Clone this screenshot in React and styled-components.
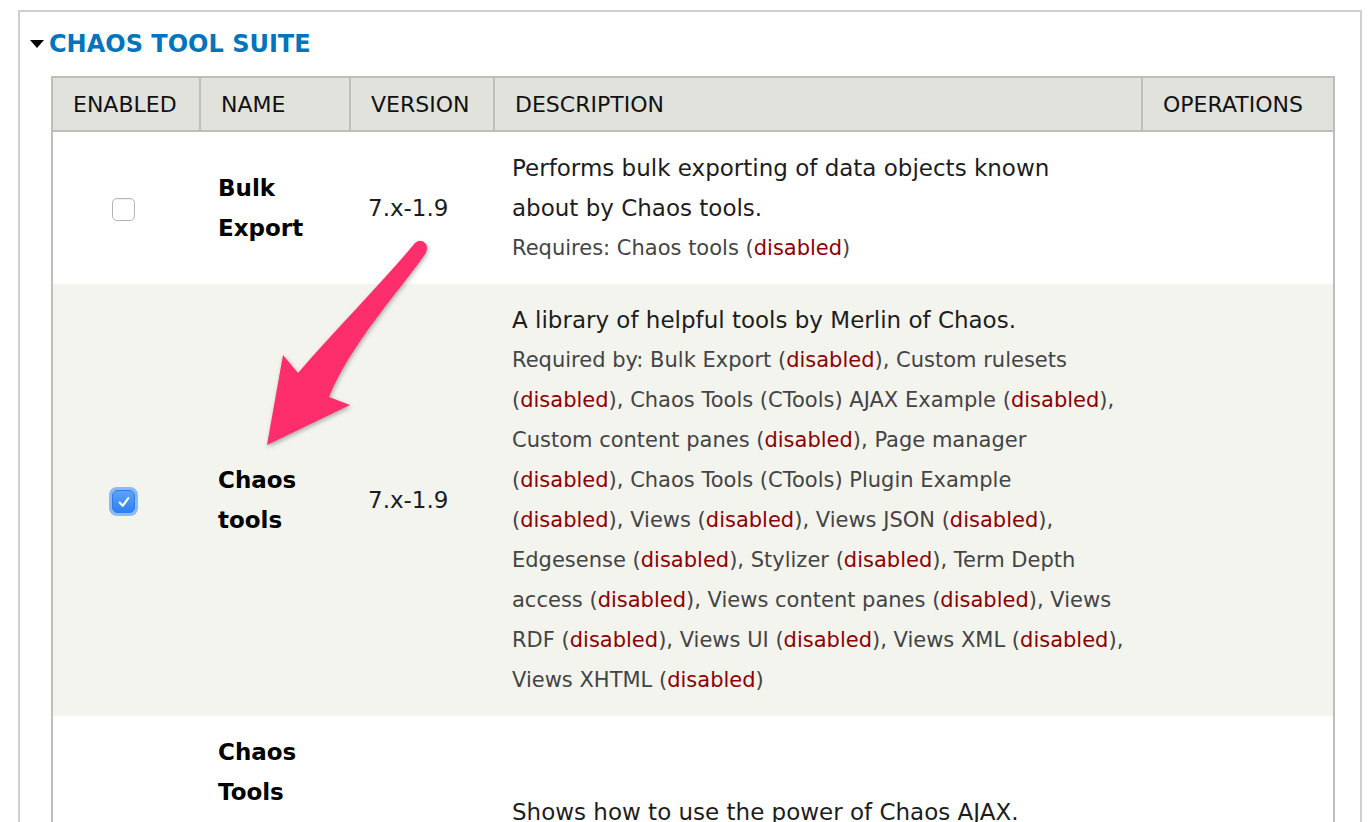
import React from 'react';
import styled, { createGlobalStyle } from 'styled-components';

const GlobalStyle = createGlobalStyle`
  body {
    margin: 0;
    background: #fff;
    font-family: "DejaVu Sans", "Liberation Sans", sans-serif;
    color: #1d1d1d;
  }
`;

const Page = styled.div`
  position: relative;
  padding: 10px 10px 0 18px;
`;

const Fieldset = styled.div`
  border: 2px solid #cfcfcf;
  border-bottom: none;
  padding: 16px 25px 40px 10px;
`;

const Legend = styled.div`
  display: flex;
  align-items: center;
  height: 32px;
  gap: 5px;
  color: #0074bd;
  font-size: 24px;
  font-weight: bold;
  text-transform: uppercase;
`;

const Caret = styled.span`
  width: 0;
  height: 0;
  border-left: 7px solid transparent;
  border-right: 7px solid transparent;
  border-top: 8px solid #000;
`;

const Table = styled.table`
  margin: 16px 0 0 21px;
  width: 1282px;
  table-layout: fixed;
  border-collapse: collapse;
  border-left: 2px solid #bebfb9;
  border-right: 2px solid #bebfb9;
`;

const Th = styled.th`
  height: 52px;
  padding: 0 20px;
  background: #e1e2dc;
  border: 2px solid #bebfb9;
  font-size: 22px;
  font-weight: normal;
  text-align: left;
  text-transform: uppercase;
  color: #111;
`;

const Row = styled.tr`
  background: ${p => (p.$even ? '#f3f4ee' : '#fff')};
`;

const Td = styled.td`
  padding: 16px 18px;
  vertical-align: middle;
  font-size: 23px;
  line-height: 40px;
`;

const CheckCell = styled(Td)`
  padding: 16px 21px 16px 15px;
  text-align: center;
`;

const Name = styled(Td)`
  font-weight: bold;
  color: #000;
`;

const Line = styled.div`
  white-space: nowrap;
`;

const Requires = styled(Line)`
  font-size: 21px;
  color: #444;
`;

const Disabled = styled.span`
  color: #8b0000;
`;

const Box = styled.span`
  display: inline-flex;
  align-items: center;
  justify-content: center;
  vertical-align: middle;
  width: 23px;
  height: 23px;
  box-sizing: border-box;
  border-radius: 5px;
  border: 1px solid ${p => (p.$checked ? '#2f7de8' : '#b4b4b4')};
  background: ${p => (p.$checked ? 'linear-gradient(#5aa2fb, #2f80f0)' : '#fff')};
  box-shadow: ${p => (p.$checked ? '0 0 0 3px #8bb9f6' : 'inset 0 1px 1px rgba(0,0,0,0.06)')};
`;

const Arrow = styled.svg`
  position: absolute;
  left: 255px;
  top: 235px;
  overflow: visible;
  filter: drop-shadow(1px 2px 2px rgba(0, 0, 0, 0.3));
`;

const Checkbox = ({ checked }) => (
  <Box $checked={checked}>
    {checked && (
      <svg width="14" height="14" viewBox="0 0 13 13">
        <path d="M2.5 7 L5.3 10 L10.5 2.8" fill="none" stroke="#fff" strokeWidth="2" strokeLinecap="round" strokeLinejoin="round" />
      </svg>
    )}
  </Box>
);

const dis = <>(<Disabled>disabled</Disabled>)</>;

const modules = [
  {
    name: 'Bulk Export',
    checked: false,
    description: ['Performs bulk exporting of data objects known', 'about by Chaos tools.'],
    extra: [<>Requires: Chaos tools {dis}</>],
  },
  {
    name: 'Chaos tools',
    checked: true,
    description: ['A library of helpful tools by Merlin of Chaos.'],
    extra: [
      <>Required by: Bulk Export {dis}, Custom rulesets</>,
      <>{dis}, Chaos Tools (CTools) AJAX Example {dis},</>,
      <>Custom content panes {dis}, Page manager</>,
      <>{dis}, Chaos Tools (CTools) Plugin Example</>,
      <>{dis}, Views {dis}, Views JSON {dis},</>,
      <>Edgesense {dis}, Stylizer {dis}, Term Depth</>,
      <>access {dis}, Views content panes {dis}, Views</>,
      <>RDF {dis}, Views UI {dis}, Views XML {dis},</>,
      <>Views XHTML {dis}</>,
    ],
  },
  {
    name: 'Chaos Tools (CTools) AJAX Example',
    checked: false,
    description: ['Shows how to use the power of Chaos AJAX.'],
    extra: [<>Requires: Chaos tools {dis}</>],
  },
];

const App = () => (
  <Page>
    <GlobalStyle />
    <Fieldset>
      <Legend>
        <Caret />
        Chaos tool suite
      </Legend>
      <Table>
        <colgroup>
          <col style={{ width: 148 }} />
          <col style={{ width: 150 }} />
          <col style={{ width: 144 }} />
          <col style={{ width: 648 }} />
          <col style={{ width: 192 }} />
        </colgroup>
        <thead>
          <tr>
            <Th>Enabled</Th>
            <Th>Name</Th>
            <Th>Version</Th>
            <Th>Description</Th>
            <Th>Operations</Th>
          </tr>
        </thead>
        <tbody>
          {modules.map((m, i) => (
            <Row key={m.name} $even={i % 2 === 1}>
              <CheckCell>
                <Checkbox checked={m.checked} />
              </CheckCell>
              <Name>{m.name}</Name>
              <Td>7.x-1.9</Td>
              <Td>
                {m.description.map((d, j) => (
                  <Line key={j}>{d}</Line>
                ))}
                {m.extra.map((e, j) => (
                  <Requires key={j}>{e}</Requires>
                ))}
              </Td>
              <Td />
            </Row>
          ))}
        </tbody>
      </Table>
    </Fieldset>
    <Arrow width="180" height="225" viewBox="0 0 180 225">
      <path
        d="M160 8 Q166 3 171 9 Q174 15 168 22 C145 55 95 110 74 162 L95 170 L12 210 L28 120 L43 138 C80 95 125 50 160 8 Z"
        fill="#fe2e6c"
      />
    </Arrow>
  </Page>
);

export default App;
